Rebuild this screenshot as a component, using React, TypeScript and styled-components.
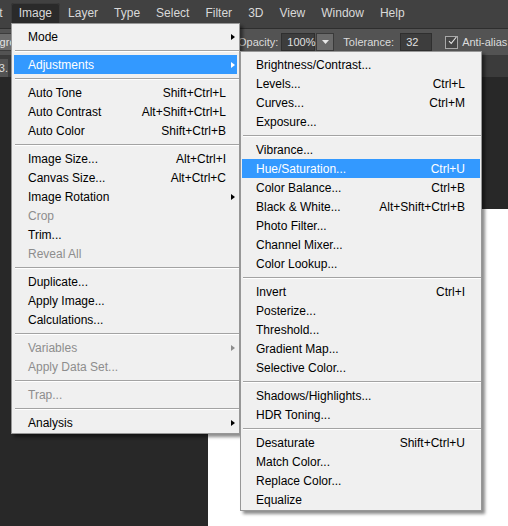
import React from 'react';
import styled, { createGlobalStyle } from 'styled-components';

const GlobalStyle = createGlobalStyle`
  html, body {
    margin: 0;
    padding: 0;
    background: #282828;
  }
  body {
    font-family: "Liberation Sans", Arial, sans-serif;
    font-size: 12px;
  }
`;

type Entry =
  | 'sep'
  | {
      label: string;
      shortcut?: string;
      sub?: boolean;
      active?: boolean;
      disabled?: boolean;
    };

const imageMenu: Entry[] = [
  { label: 'Mode', sub: true },
  'sep',
  { label: 'Adjustments', sub: true, active: true },
  'sep',
  { label: 'Auto Tone', shortcut: 'Shift+Ctrl+L' },
  { label: 'Auto Contrast', shortcut: 'Alt+Shift+Ctrl+L' },
  { label: 'Auto Color', shortcut: 'Shift+Ctrl+B' },
  'sep',
  { label: 'Image Size...', shortcut: 'Alt+Ctrl+I' },
  { label: 'Canvas Size...', shortcut: 'Alt+Ctrl+C' },
  { label: 'Image Rotation', sub: true },
  { label: 'Crop', disabled: true },
  { label: 'Trim...' },
  { label: 'Reveal All', disabled: true },
  'sep',
  { label: 'Duplicate...' },
  { label: 'Apply Image...' },
  { label: 'Calculations...' },
  'sep',
  { label: 'Variables', sub: true, disabled: true },
  { label: 'Apply Data Set...', disabled: true },
  'sep',
  { label: 'Trap...', disabled: true },
  'sep',
  { label: 'Analysis', sub: true },
];

const adjustmentsMenu: Entry[] = [
  { label: 'Brightness/Contrast...' },
  { label: 'Levels...', shortcut: 'Ctrl+L' },
  { label: 'Curves...', shortcut: 'Ctrl+M' },
  { label: 'Exposure...' },
  'sep',
  { label: 'Vibrance...' },
  { label: 'Hue/Saturation...', shortcut: 'Ctrl+U', active: true },
  { label: 'Color Balance...', shortcut: 'Ctrl+B' },
  { label: 'Black & White...', shortcut: 'Alt+Shift+Ctrl+B' },
  { label: 'Photo Filter...' },
  { label: 'Channel Mixer...' },
  { label: 'Color Lookup...' },
  'sep',
  { label: 'Invert', shortcut: 'Ctrl+I' },
  { label: 'Posterize...' },
  { label: 'Threshold...' },
  { label: 'Gradient Map...' },
  { label: 'Selective Color...' },
  'sep',
  { label: 'Shadows/Highlights...' },
  { label: 'HDR Toning...' },
  'sep',
  { label: 'Desaturate', shortcut: 'Shift+Ctrl+U' },
  { label: 'Match Color...' },
  { label: 'Replace Color...' },
  { label: 'Equalize' },
];

const topMenus = ['Edit', 'Image', 'Layer', 'Type', 'Select', 'Filter', '3D', 'View', 'Window', 'Help'];

const Screen = styled.div`
  position: relative;
  width: 508px;
  height: 526px;
  overflow: hidden;
  display: flex;
  flex-direction: column;
  background: #282828;
`;

const MenuBar = styled.div`
  height: 29px;
  flex: none;
  display: flex;
  align-items: flex-end;
  padding-bottom: 5px;
  box-sizing: border-box;
  margin-left: -26px;
  background: #414141;
  border-bottom: 1px solid #2e2e2e;
`;

const TopItem = styled.div<{ $open?: boolean }>`
  line-height: 20px;
  padding: 0 8px;
  color: #d9d9d9;
  font-size: 12px;
  white-space: nowrap;
  box-sizing: border-box;
  border-radius: 3px 3px 0 0;
  background: ${(p) => (p.$open ? '#2a2a2a' : 'transparent')};
  box-shadow: ${(p) => (p.$open ? 'inset 0 0 0 1px #3a3a3a' : 'none')};
  margin-bottom: ${(p) => (p.$open ? '-5px' : '0')};
  height: ${(p) => (p.$open ? '25px' : '20px')};
`;

const OptionsBar = styled.div`
  height: 26px;
  flex: none;
  display: flex;
  align-items: center;
  background: #535353;
  border-bottom: 1px solid #3a3a3a;
  color: #dcdcdc;
  font-size: 11px;
  white-space: nowrap;
  overflow: hidden;
`;

const HiddenGroup = styled.div`
  width: 238px;
  flex: none;
  display: flex;
  align-items: center;
  gap: 6px;
  overflow: hidden;
`;

const SelectBox = styled.div<{ $w: number; $shift?: number }>`
  width: ${(p) => p.$w}px;
  height: 18px;
  line-height: 17px;
  flex: none;
  box-sizing: border-box;
  padding: 0 4px;
  margin-left: ${(p) => p.$shift ?? 0}px;
  background: #6b6b6b;
  border: 1px solid #3c3c3c;
  color: #e4e4e4;
  font-size: 11px;
  overflow: hidden;
`;

const Label = styled.span<{ $gap?: number }>`
  margin-left: ${(p) => p.$gap ?? 0}px;
  color: #dcdcdc;
`;

const NumberField = styled.div<{ $w: number; $gap?: number }>`
  width: ${(p) => p.$w}px;
  height: 18px;
  line-height: 17px;
  flex: none;
  box-sizing: border-box;
  padding: 0 5px;
  margin-left: ${(p) => p.$gap ?? 3}px;
  background: #3d3d3d;
  border: 1px solid #2f2f2f;
  color: #e0e0e0;
`;

const DropButton = styled.div`
  width: 18px;
  height: 18px;
  flex: none;
  box-sizing: border-box;
  margin-left: 1px;
  background: #6a6a6a;
  border: 1px solid #3a3a3a;
  display: flex;
  align-items: center;
  justify-content: center;
`;

const VSep = styled.div`
  width: 1px;
  height: 20px;
  margin: 0 3px 0 8px;
  background: #3a3a3a;
  box-shadow: 1px 0 0 #666;
`;

const CheckBox = styled.div<{ $gap?: number }>`
  width: 13px;
  height: 13px;
  flex: none;
  box-sizing: border-box;
  margin: 0 4px 0 ${(p) => p.$gap ?? 2}px;
  border: 1px solid #a8a8a8;
  background: #464646;
  display: flex;
  align-items: center;
  justify-content: center;
  overflow: visible;
`;

const TabBar = styled.div`
  height: 21px;
  flex: none;
  display: flex;
  align-items: flex-end;
  background: #3b3b3b;
  overflow: hidden;
`;

const DocTab = styled.div`
  width: 120px;
  height: 18px;
  line-height: 18px;
  margin-left: -112px;
  padding: 0 0 0 8px;
  box-sizing: border-box;
  background: #535353;
  color: #dcdcdc;
  font-size: 11px;
  text-align: right;
  white-space: nowrap;
  overflow: hidden;
`;

const Workspace = styled.div`
  flex: 1;
  display: flex;
  padding: 132px 0 0 208px;
  background: #282828;
`;

const Canvas = styled.div`
  flex: 1;
  background: #ffffff;
`;

const Menu = styled.div<{ $x: number; $y: number; $w: number }>`
  position: absolute;
  left: ${(p) => p.$x}px;
  top: ${(p) => p.$y}px;
  width: ${(p) => p.$w}px;
  box-sizing: border-box;
  padding: 3px 0 1px;
  background: #f0f0f0;
  border: 1px solid #979797;
  box-shadow: 3px 3px 3px rgba(0, 0, 0, 0.45);
  font-family: "Liberation Sans", Arial, sans-serif;
  font-size: 12px;
`;

const Item = styled.div<{ $active?: boolean; $disabled?: boolean; $arrowCol: number; $inset: number }>`
  display: grid;
  grid-template-columns: 1fr auto ${(p) => p.$arrowCol}px;
  align-items: center;
  height: 19px;
  margin: 0 ${(p) => p.$inset}px;
  padding-left: 14px;
  color: ${(p) => (p.$active ? '#ffffff' : p.$disabled ? '#8d8d8d' : '#000000')};
  background: ${(p) => (p.$active ? '#3399ff' : 'transparent')};
  white-space: nowrap;
`;

const Shortcut = styled.span`
  text-align: right;
`;

const Arrow = styled.span<{ $color: string }>`
  justify-self: center;
  width: 0;
  height: 0;
  border-top: 3.5px solid transparent;
  border-bottom: 3.5px solid transparent;
  border-left: 4px solid ${(p) => p.$color};
  margin-left: 2px;
`;

const Separator = styled.div<{ $inset: number }>`
  height: 9px;
  display: flex;
  align-items: center;
  margin: 0 0 0 ${(p) => p.$inset}px;

  &::before {
    content: '';
    flex: 1;
    height: 1px;
    background: #a3a3a3;
    box-shadow: 0 1px 0 #ffffff;
  }
`;

interface DropMenuProps {
  entries: Entry[];
  x: number;
  y: number;
  width: number;
  arrowCol: number;
  inset: number;
}

const DropMenu: React.FC<DropMenuProps> = ({ entries, x, y, width, arrowCol, inset }) => (
  <Menu $x={x} $y={y} $w={width}>
    {entries.map((e, i) =>
      e === 'sep' ? (
        <Separator key={i} $inset={inset + 1} />
      ) : (
        <Item key={i} $active={e.active} $disabled={e.disabled} $arrowCol={arrowCol} $inset={inset}>
          <span>{e.label}</span>
          <Shortcut>{e.shortcut}</Shortcut>
          {e.sub ? (
            <Arrow $color={e.active ? '#ffffff' : e.disabled ? '#8d8d8d' : '#000000'} />
          ) : (
            <span />
          )}
        </Item>
      )
    )}
  </Menu>
);

const App: React.FC = () => (
  <>
    <GlobalStyle />
    <Screen>
      <MenuBar>
        {topMenus.map((m) => (
          <TopItem key={m} $open={m === 'Image'}>
            {m}
          </TopItem>
        ))}
      </MenuBar>
      <OptionsBar>
        <HiddenGroup>
          <SelectBox $w={70} $shift={-28}>Foreground</SelectBox>
          <SelectBox $w={90} />
        </HiddenGroup>
        <Label>Opacity:</Label>
        <NumberField $w={34}>100%</NumberField>
        <DropButton>
          <svg width="7" height="4" viewBox="0 0 7 4">
            <path d="M0 0h7L3.5 4z" fill="#e8e8e8" />
          </svg>
        </DropButton>
        <Label $gap={9}>Tolerance:</Label>
        <NumberField $w={32} $gap={6}>32</NumberField>
        <VSep />
        <CheckBox>
          <svg width="14" height="13" viewBox="0 0 14 13" style={{ marginTop: -3, marginLeft: 2 }}>
            <path d="M1.5 7.5 L5 11 L13 1" stroke="#e6e6e6" strokeWidth="1.6" fill="none" />
          </svg>
        </CheckBox>
        <Label>Anti-alias</Label>
        <CheckBox $gap={7} />
      </OptionsBar>
      <TabBar>
        <DocTab>Untitled-1 @ 33.</DocTab>
      </TabBar>
      <Workspace>
        <Canvas />
      </Workspace>
      <DropMenu entries={imageMenu} x={11} y={23} width={229} arrowCol={11} inset={2} />
      <DropMenu entries={adjustmentsMenu} x={240} y={51} width={242} arrowCol={15} inset={1} />
    </Screen>
  </>
);

export default App;
